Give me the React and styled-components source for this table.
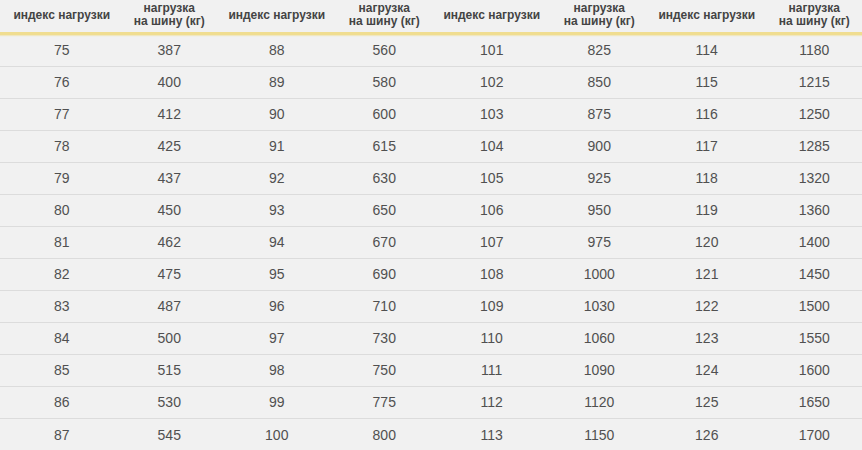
import React from "react";
import styled, { createGlobalStyle } from "styled-components";

const rows = [
  [75, 387, 88, 560, 101, 825, 114, 1180],
  [76, 400, 89, 580, 102, 850, 115, 1215],
  [77, 412, 90, 600, 103, 875, 116, 1250],
  [78, 425, 91, 615, 104, 900, 117, 1285],
  [79, 437, 92, 630, 105, 925, 118, 1320],
  [80, 450, 93, 650, 106, 950, 119, 1360],
  [81, 462, 94, 670, 107, 975, 120, 1400],
  [82, 475, 95, 690, 108, 1000, 121, 1450],
  [83, 487, 96, 710, 109, 1030, 122, 1500],
  [84, 500, 97, 730, 110, 1060, 123, 1550],
  [85, 515, 98, 750, 111, 1090, 124, 1600],
  [86, 530, 99, 775, 112, 1120, 125, 1650],
  [87, 545, 100, 800, 113, 1150, 126, 1700],
];

const GlobalStyle = createGlobalStyle`
  html, body {
    margin: 0;
    padding: 0;
    background: #f0f0f0;
  }
`;

const Wrapper = styled.div`
  width: 862px;
  height: 450px;
  overflow: hidden;
  background: #f1f1f1;
  font-family: "Liberation Sans", Arial, sans-serif;
  color: #444;
`;

const Row = styled.div`
  display: grid;
  grid-template-columns: repeat(8, 107.5px);
  padding-left: 8px;
  width: 868px;
  box-sizing: border-box;
  height: ${(p) => (p.$head ? "35px" : "32px")};
  border-bottom: ${(p) =>
    p.$head ? "3px solid #f0dd90" : p.$last ? "none" : "1px solid #dcdcdc"};
  box-shadow: ${(p) => (p.$head ? "0 1px 1px rgba(240, 225, 160, 0.6)" : "none")};
`;

const Cell = styled.div`
  display: flex;
  align-items: center;
  justify-content: center;
  text-align: center;
  font-size: ${(p) => (p.$head ? "12px" : "14px")};
  font-weight: ${(p) => (p.$head ? "bold" : "normal")};
  line-height: ${(p) => (p.$head ? "13px" : "16px")};
  color: ${(p) => (p.$head ? "#444" : "#505050")};
  padding-bottom: ${(p) => (p.$head ? "2px" : "1px")};
`;

export default function App() {
  const heads = [];
  for (let i = 0; i < 4; i++) {
    heads.push(
      <Cell $head key={"i" + i}>
        индекс нагрузки
      </Cell>
    );
    heads.push(
      <Cell $head key={"n" + i}>
        нагрузка
        <br />
        на шину (кг)
      </Cell>
    );
  }

  return (
    <Wrapper>
      <GlobalStyle />
      <Row $head>{heads}</Row>
      {rows.map((r, idx) => (
        <Row key={idx} $last={idx === rows.length - 1}>
          {r.map((v, j) => (
            <Cell key={j}>{v}</Cell>
          ))}
        </Row>
      ))}
    </Wrapper>
  );
}
